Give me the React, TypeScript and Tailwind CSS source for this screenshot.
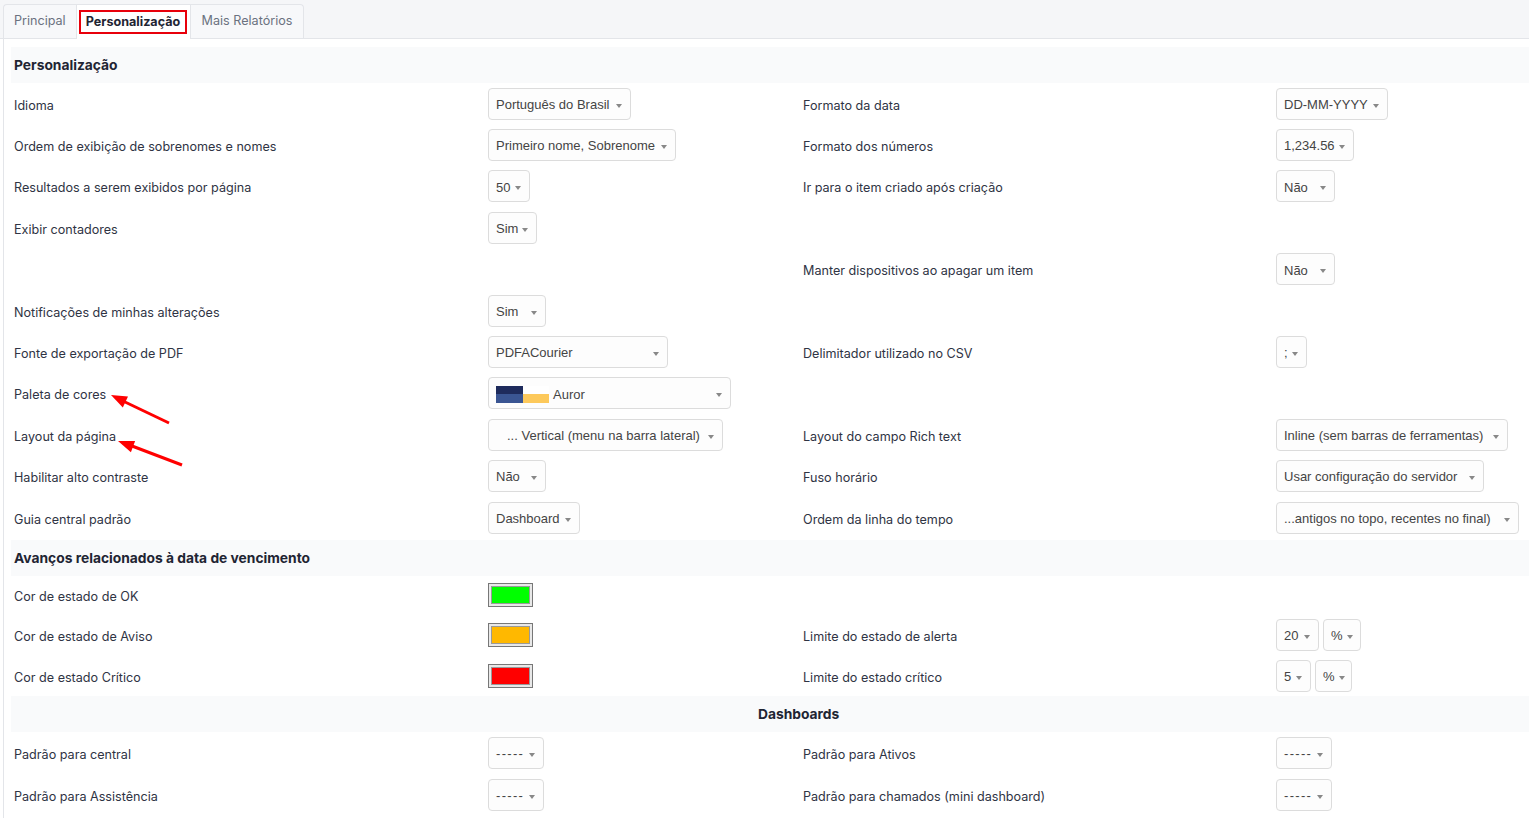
import React from "react";

type Opt = { text: string; w: number; pl?: number; palette?: boolean; wide?: boolean };
type Cell = { label?: string; selects?: Opt[]; swatch?: string };
type Row = { h: number; left: Cell; right: Cell };

const labelFont = { fontFamily: "Inter, 'Noto Sans', sans-serif" };
const selectFont = { fontFamily: "'Liberation Sans', Arial, sans-serif" };

function Caret() {
  return <span className="mt-[2px] inline-block h-0 w-0 shrink-0 border-x-[3px] border-t-[4px] border-x-transparent border-t-[#888]" />;
}

function Select({ opt }: { opt: Opt }) {
  return (
    <div
      className="flex h-[32px] shrink-0 items-center justify-between gap-[4px] rounded-[4px] border border-[#dcdcdc] bg-[#fdfdfd] pr-[8px] pt-[2px] text-[13px] text-[#444]"
      style={{ ...selectFont, width: opt.w, paddingLeft: opt.pl ?? 7 }}
    >
      <span className={"flex items-center whitespace-nowrap" + (opt.wide ? " tracking-[1.3px]" : "")}>
        {opt.palette ? (
          <span className="mr-[4px] grid h-[17px] w-[53px] grid-cols-2 grid-rows-2">
            <span className="bg-[#1e2b5c]" />
            <span className="bg-white" />
            <span className="bg-[#3a5592]" />
            <span className="bg-[#fdc95b]" />
          </span>
        ) : null}
        {opt.text}
      </span>
      <Caret />
    </div>
  );
}

function Swatch({ color }: { color: string }) {
  return (
    <div className="h-[24px] w-[45px] border border-[#777] bg-[#e8e8e8] p-[2px]">
      <div className="h-full w-full border border-[#999]" style={{ backgroundColor: color }} />
    </div>
  );
}

function Control({ cell }: { cell: Cell }) {
  if (cell.swatch) return <Swatch color={cell.swatch} />;
  if (!cell.selects) return null;
  return (
    <div className="flex gap-[4px]">
      {cell.selects.map((o, i) => (
        <Select key={i} opt={o} />
      ))}
    </div>
  );
}

function Label({ text }: { text?: string }) {
  return (
    <span className="text-[12.6px] text-[#2f3444]" style={labelFont}>
      {text}
    </span>
  );
}

function SettingRow({ row }: { row: Row }) {
  return (
    <div className="flex items-center" style={{ height: row.h }}>
      <div className="w-[477px] shrink-0 pl-[3px]">
        <Label text={row.left.label} />
      </div>
      <div className="w-[315px] shrink-0">
        <Control cell={row.left} />
      </div>
      <div className="w-[473px] shrink-0">
        <Label text={row.right.label} />
      </div>
      <div className="flex-1">
        <Control cell={row.right} />
      </div>
    </div>
  );
}

function SectionHeader({ title, center }: { title: string; center?: boolean }) {
  return (
    <div
      className={
        "flex h-[36px] items-center bg-[#f9fafb] text-[13.8px] font-bold text-[#1f2533] " +
        (center ? "pl-[747px]" : "pl-[3px]")
      }
      style={labelFont}
    >
      {title}
    </div>
  );
}

const s = (text: string, w: number, pl?: number): Opt => ({ text, w, pl });
const dashes: Opt = { text: "-----", w: 56, wide: true };

const personal: Row[] = [
  { h: 41.4, left: { label: "Idioma", selects: [s("Português do Brasil", 143)] }, right: { label: "Formato da data", selects: [s("DD-MM-YYYY", 112)] } },
  { h: 41.4, left: { label: "Ordem de exibição de sobrenomes e nomes", selects: [s("Primeiro nome, Sobrenome", 188)] }, right: { label: "Formato dos números", selects: [s("1,234.56", 78)] } },
  { h: 41.4, left: { label: "Resultados a serem exibidos por página", selects: [s("50", 42)] }, right: { label: "Ir para o item criado após criação", selects: [s("Não", 59)] } },
  { h: 41.4, left: { label: "Exibir contadores", selects: [s("Sim", 49)] }, right: {} },
  { h: 41.4, left: {}, right: { label: "Manter dispositivos ao apagar um item", selects: [s("Não", 59)] } },
  { h: 41.4, left: { label: "Notificações de minhas alterações", selects: [s("Sim", 58)] }, right: {} },
  { h: 41.4, left: { label: "Fonte de exportação de PDF", selects: [s("PDFACourier", 180)] }, right: { label: "Delimitador utilizado no CSV", selects: [s(";", 31)] } },
  { h: 41.4, left: { label: "Paleta de cores", selects: [{ text: "Auror", w: 243, palette: true }] }, right: {} },
  { h: 41.4, left: { label: "Layout da página", selects: [s("... Vertical (menu na barra lateral)", 235, 18)] }, right: { label: "Layout do campo Rich text", selects: [s("Inline (sem barras de ferramentas)", 232)] } },
  { h: 41.4, left: { label: "Habilitar alto contraste", selects: [s("Não", 58)] }, right: { label: "Fuso horário", selects: [s("Usar configuração do servidor", 208)] } },
  { h: 41.4, left: { label: "Guia central padrão", selects: [s("Dashboard", 92)] }, right: { label: "Ordem da linha do tempo", selects: [s("...antigos no topo, recentes no final)", 243)] } },
];

const due: Row[] = [
  { h: 38, left: { label: "Cor de estado de OK", swatch: "#00ff00" }, right: {} },
  { h: 41, left: { label: "Cor de estado de Aviso", swatch: "#ffb800" }, right: { label: "Limite do estado de alerta", selects: [s("20", 43), s("%", 38)] } },
  { h: 41, left: { label: "Cor de estado Crítico", swatch: "#ff0000" }, right: { label: "Limite do estado crítico", selects: [s("5", 35), s("%", 37)] } },
];

const dash: Row[] = [
  { h: 41.5, left: { label: "Padrão para central", selects: [dashes] }, right: { label: "Padrão para Ativos", selects: [dashes] } },
  { h: 41.5, left: { label: "Padrão para Assistência", selects: [dashes] }, right: { label: "Padrão para chamados (mini dashboard)", selects: [dashes] } },
];

export default function App() {
  return (
    <div className="relative h-[818px] w-[1529px] overflow-hidden bg-white" style={labelFont}>
      <div className="flex h-[39px] items-end border-b border-[#e3e5e9] bg-[#f5f6f8] pl-[3px]">
        <div className="flex h-[34px] w-[73px] items-center rounded-tl-[4px] border-l border-t border-[#e3e5e9] bg-[#f7f8fa] pl-[10px] text-[12.6px] text-[#6b7280]">
          Principal
        </div>
        <div className="-mb-px flex h-[35px] w-[115px] items-center border-x border-t border-[#e3e5e9] bg-white px-[2px]">
          <span className="flex h-[24px] w-[108px] items-center justify-center border-2 border-[#e8000b] text-[12.6px] font-bold text-[#1f2533]">
            Personalização
          </span>
        </div>
        <div className="flex h-[34px] w-[113px] items-center justify-center rounded-tr-[4px] border-r border-t border-[#e3e5e9] bg-[#f7f8fa] text-[12.6px] text-[#6b7280]">
          Mais Relatórios
        </div>
      </div>
      <div className="ml-[3px] h-full border-l border-[#e3e5e9] pl-[7px] pt-[8px]">
        <SectionHeader title="Personalização" />
        {personal.map((r, i) => (
          <SettingRow key={i} row={r} />
        ))}
        <div className="h-[2px]" />
        <SectionHeader title="Avanços relacionados à data de vencimento" />
        {due.map((r, i) => (
          <SettingRow key={i} row={r} />
        ))}
        <SectionHeader title="Dashboards" center />
        {dash.map((r, i) => (
          <SettingRow key={i} row={r} />
        ))}
      </div>
      <svg className="pointer-events-none absolute left-0 top-0" width="1529" height="818">
        <line x1="169" y1="423" x2="124" y2="401.5" stroke="#ff0000" strokeWidth="3" />
        <polygon points="111,395 128,396.6 122.8,407.4" fill="#ff0000" />
        <line x1="182" y1="465" x2="132" y2="446" stroke="#ff0000" strokeWidth="3" />
        <polygon points="118,441 135.1,441 130.9,452.2" fill="#ff0000" />
      </svg>
    </div>
  );
}
